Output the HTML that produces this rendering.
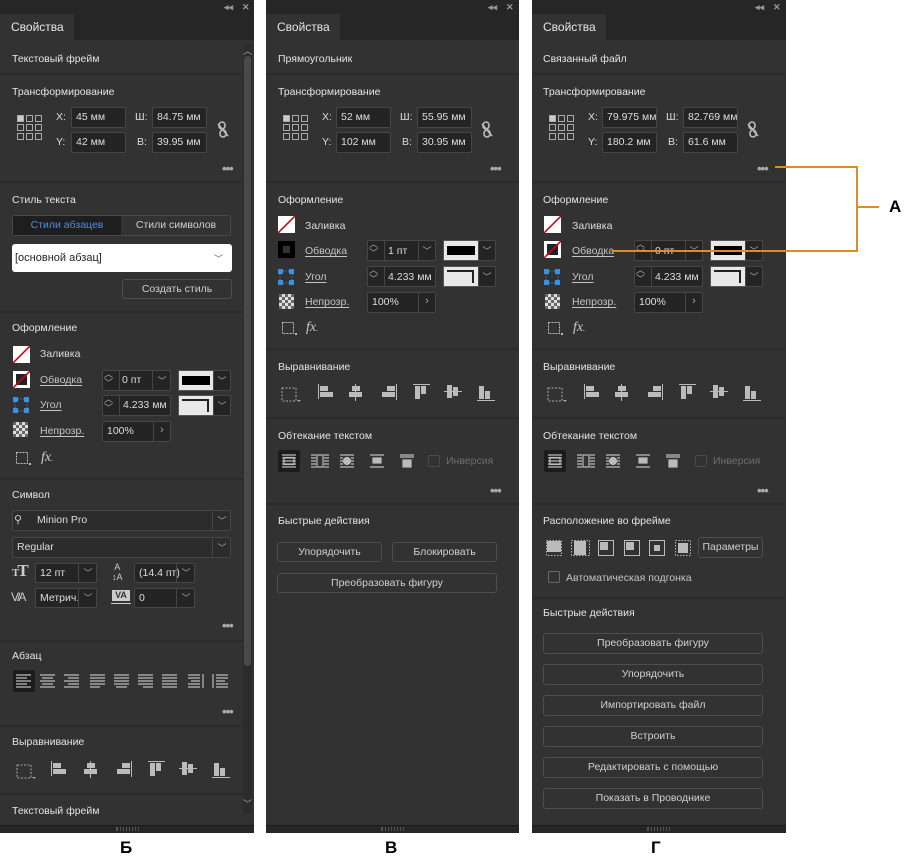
<!DOCTYPE html>
<html><head><meta charset="utf-8">
<style>
*{margin:0;padding:0;box-sizing:border-box}
body{width:910px;height:862px;background:#fff;position:relative;overflow:hidden;font-family:"Liberation Sans",sans-serif}
.p{position:absolute;top:0;height:833px;background:#323232;overflow:hidden}
.top{position:absolute;left:0;top:0;right:0;height:40px;background:#262626}
.tab{position:absolute;left:0;top:14px;width:74px;height:26px;background:#323232;color:#e6e6e6;font-size:12px;line-height:26px;padding-left:11px}
.ctl{position:absolute;top:2px;color:#999;font-size:9px;font-weight:bold}
.l{position:absolute;font-size:10.5px;line-height:14px;color:#dcdcdc;white-space:nowrap}
.h{color:#e4e4e4}
.u{color:#c4c4c4;text-decoration:underline;text-underline-offset:2px}
.in{position:absolute;background:#242424;border:1px solid #464646;border-radius:2px;color:#dedede;font-size:10.5px;padding-left:4px;white-space:nowrap;overflow:hidden}
.b{position:absolute;border:1px solid #4e4e4e;border-radius:3px;color:#d0d0d0;font-size:10.5px;text-align:center;white-space:nowrap}
.dv{position:absolute;left:0;right:0;height:2px;background:#2a2a2a}
.dots{position:absolute;font-size:13px;color:#aaa;letter-spacing:-1px;line-height:8px;font-weight:bold}
.bot{position:absolute;left:0;right:0;top:825px;height:8px;background:#262626;border-top:1px solid #1a1a1a}
.grip{position:absolute;top:827px;width:24px;height:4px;border-left:1px solid #555;background:repeating-linear-gradient(90deg,#555 0 1px,transparent 1px 3px)}
.sw{position:absolute;background:#e8e8e8;border:1px solid #555}
.chev{position:absolute;color:#aaa;font-size:9px;text-align:center}
svg{position:absolute}
.lab{position:absolute;font-size:17px;font-weight:bold;color:#000}
</style></head><body>

<!-- ========== PANEL 1 ========== -->
<div class="p" style="left:0;width:254px">
<div class="top"></div><div class="tab">Свойства</div>
<div class="ctl" style="left:224px">◂◂</div><div class="ctl" style="left:242px">✕</div>
<!-- scrollbar -->
<div style="position:absolute;left:243px;top:44px;width:9px;height:770px;background:#2c2c2c"></div>
<div style="position:absolute;left:244px;top:56px;width:7px;height:610px;background:#4a4a4a;border-radius:4px"></div>
<div class="l h" style="left:12px;top:52px">Текстовый фрейм</div>
<div class="dv" style="top:73px;right:12px"></div>
<div class="l h" style="left:12px;top:85px">Трансформирование</div>
<svg style="left:17px;top:115px" width="26" height="26"><g fill="none" stroke="#aaa"><rect x="0.5" y="0.5" width="6" height="6" fill="#ccc"/><rect x="9.5" y="0.5" width="6" height="6"/><rect x="18.5" y="0.5" width="6" height="6"/><rect x="0.5" y="9.5" width="6" height="6"/><rect x="9.5" y="9.5" width="6" height="6"/><rect x="18.5" y="9.5" width="6" height="6"/><rect x="0.5" y="18.5" width="6" height="6"/><rect x="9.5" y="18.5" width="6" height="6"/><rect x="18.5" y="18.5" width="6" height="6"/></g></svg>
<div class="l" style="left:56px;top:110px">X:</div><div class="in" style="left:71px;top:107px;width:55px;height:21px;line-height:19px">45 мм</div>
<div class="l" style="left:56px;top:135px">Y:</div><div class="in" style="left:71px;top:132px;width:55px;height:21px;line-height:19px">42 мм</div>
<div class="l" style="left:135px;top:110px">Ш:</div><div class="in" style="left:152px;top:107px;width:55px;height:21px;line-height:19px">84.75 мм</div>
<div class="l" style="left:137px;top:135px">В:</div><div class="in" style="left:152px;top:132px;width:55px;height:21px;line-height:19px">39.95 мм</div>
<svg style="left:217px;top:121px" width="12" height="18"><g fill="none" stroke="#bbb" stroke-width="1.6"><rect x="2" y="1" width="6" height="7" rx="3"/><rect x="3" y="9" width="6" height="7" rx="3"/><line x1="1" y1="3" x2="11" y2="15"/></g></svg>
<div class="dots" style="left:222px;top:165px">•••</div>
<div class="dv" style="top:181px;right:12px"></div>
<div class="l h" style="left:12px;top:193px">Стиль текста</div>
<div style="position:absolute;left:12px;top:215px;width:219px;height:21px;border:1px solid #4a4a4a;border-radius:3px"></div>
<div style="position:absolute;left:13px;top:216px;width:108px;height:19px;background:#1e1e1e;color:#4a90e2;font-size:10.5px;text-align:center;line-height:19px">Стили абзацев</div>
<div style="position:absolute;left:122px;top:216px;width:108px;height:19px;color:#d0d0d0;font-size:10.5px;text-align:center;line-height:19px">Стили символов</div>
<div style="position:absolute;left:12px;top:244px;width:220px;height:28px;background:#fff;border-radius:3px;color:#222;font-size:11px;line-height:28px;padding-left:3px">[основной абзац]</div>
<div class="chev" style="left:214px;top:252px;color:#666">﹀</div>
<div class="b" style="left:122px;top:279px;width:110px;height:20px;line-height:18px">Создать стиль</div>
<div class="dv" style="top:311px;right:12px"></div>
<div class="l h" style="left:12px;top:321px">Оформление</div>
<!-- fill -->
<svg style="left:13px;top:346px" width="17" height="17"><rect width="17" height="17" fill="#fff"/><line x1="0" y1="17" x2="17" y2="0" stroke="#d0021b" stroke-width="1.6"/></svg>
<div class="l" style="left:40px;top:347px">Заливка</div>
<svg style="left:13px;top:371px" width="17" height="17"><rect width="17" height="17" fill="#fff"/><rect x="3" y="3" width="11" height="11" fill="#222"/><line x1="0" y1="17" x2="17" y2="0" stroke="#d0021b" stroke-width="1.6"/></svg>
<div class="l u" style="left:40px;top:373px">Обводка </div>
<div class="in" style="left:102px;top:370px;width:69px;height:21px"></div>
<div class="chev" style="left:104px;top:370px;line-height:9px">︿<br>﹀</div>
<div style="position:absolute;left:119px;top:371px;width:1px;height:19px;background:#464646"></div>
<div style="position:absolute;left:152px;top:371px;width:1px;height:19px;background:#464646"></div>
<div class="l" style="left:122px;top:373px">0 пт</div><div class="chev" style="left:154px;top:374px;width:16px">﹀</div>
<div class="sw" style="left:178px;top:370px;width:36px;height:21px"><div style="margin:5px 3px;height:9px;background:#000"></div></div>
<div class="in" style="left:213px;top:370px;width:18px;height:21px;padding:0"></div><div class="chev" style="left:214px;top:374px;width:16px">﹀</div>
<svg style="left:13px;top:397px" width="16" height="16"><g fill="#3d8fe0"><rect width="5" height="5"/><rect x="11" width="5" height="5"/><rect y="11" width="5" height="5"/><rect x="11" y="11" width="5" height="5"/></g><g stroke="#3d8fe0" stroke-dasharray="1 1.5"><line x1="5" y1="2" x2="11" y2="2"/><line x1="5" y1="14" x2="11" y2="14"/><line x1="2" y1="5" x2="2" y2="11"/><line x1="14" y1="5" x2="14" y2="11"/></g></svg>
<div class="l u" style="left:40px;top:398px">Угол </div>
<div class="in" style="left:102px;top:395px;width:69px;height:21px"></div>
<div class="chev" style="left:104px;top:395px;line-height:9px">︿<br>﹀</div>
<div style="position:absolute;left:119px;top:396px;width:1px;height:19px;background:#464646"></div>
<div class="l" style="left:123px;top:398px">4.233 мм</div>
<div class="sw" style="left:178px;top:395px;width:36px;height:21px"><div style="position:absolute;left:3px;top:3px;width:27px;height:13px;border-top:2px solid #222;border-right:2px solid #222"></div></div>
<div class="in" style="left:213px;top:395px;width:18px;height:21px;padding:0"></div><div class="chev" style="left:214px;top:399px;width:16px">﹀</div>
<svg style="left:13px;top:422px" width="15" height="15"><rect width="15" height="15" fill="#ddd"/><g fill="#666"><rect x="0" y="0" width="3" height="3"/><rect x="6" y="0" width="3" height="3"/><rect x="12" y="0" width="3" height="3"/><rect x="3" y="3" width="3" height="3"/><rect x="9" y="3" width="3" height="3"/><rect x="0" y="6" width="3" height="3"/><rect x="6" y="6" width="3" height="3"/><rect x="12" y="6" width="3" height="3"/><rect x="3" y="9" width="3" height="3"/><rect x="9" y="9" width="3" height="3"/><rect x="0" y="12" width="3" height="3"/><rect x="6" y="12" width="3" height="3"/><rect x="12" y="12" width="3" height="3"/></g></svg>
<div class="l u" style="left:40px;top:424px">Непрозр. </div>
<div class="in" style="left:102px;top:421px;width:69px;height:21px;line-height:19px">100%</div>
<div style="position:absolute;left:153px;top:422px;width:1px;height:19px;background:#464646"></div><div class="chev" style="left:154px;top:424px;width:16px;font-size:11px">›</div>
<svg style="left:16px;top:452px" width="16" height="14"><rect x="0.5" y="0.5" width="11" height="11" fill="none" stroke="#bbb" stroke-dasharray="2 1"/><rect x="13" y="11" width="2" height="2" fill="#bbb"/></svg>
<div class="l" style="left:41px;top:451px;font-style:italic;font-family:'Liberation Serif',serif;font-size:14px;color:#ccc">fx<span style="font-size:8px">.</span></div>
<div class="dv" style="top:478px;right:12px"></div>
<div class="l h" style="left:12px;top:488px">Символ</div>
<div class="in" style="left:12px;top:510px;width:219px;height:21px;line-height:19px;background:#2c2c2c;padding-left:24px">Minion Pro</div>
<div style="position:absolute;left:14px;top:513px;color:#ccc;font-size:11px">⚲</div>
<div style="position:absolute;left:212px;top:511px;width:1px;height:19px;background:#464646"></div><div class="chev" style="left:213px;top:514px;width:18px">﹀</div>
<div class="in" style="left:12px;top:537px;width:219px;height:21px;line-height:19px;background:#2c2c2c">Regular</div>
<div style="position:absolute;left:212px;top:538px;width:1px;height:19px;background:#464646"></div><div class="chev" style="left:213px;top:541px;width:18px">﹀</div>
<div class="l" style="left:12px;top:564px;font-size:17px;font-family:'Liberation Serif',serif;font-weight:bold;color:#ccc;letter-spacing:-2px"><span style="font-size:11px">T</span>T</div>
<div class="in" style="left:35px;top:563px;width:62px;height:20px;line-height:18px">12 пт</div>
<div style="position:absolute;left:78px;top:564px;width:1px;height:18px;background:#464646"></div><div class="chev" style="left:79px;top:566px;width:18px">﹀</div>
<div class="l" style="left:112px;top:562px;font-size:9px;line-height:10px;color:#ccc;text-align:center">A<br>↕A</div>
<div class="in" style="left:134px;top:563px;width:61px;height:20px;line-height:18px">(14.4 пт)</div>
<div style="position:absolute;left:176px;top:564px;width:1px;height:18px;background:#464646"></div><div class="chev" style="left:177px;top:566px;width:18px">﹀</div>
<div class="l" style="left:11px;top:590px;font-size:12px;color:#ccc;letter-spacing:-2px">V/A</div>
<div class="in" style="left:35px;top:588px;width:62px;height:20px;line-height:18px">Метрич.</div>
<div style="position:absolute;left:78px;top:589px;width:1px;height:18px;background:#464646"></div><div class="chev" style="left:79px;top:591px;width:18px">﹀</div>
<div style="position:absolute;left:112px;top:590px;width:18px;height:11px;background:#ccc;color:#323232;font-size:9px;font-weight:bold;line-height:11px;text-align:center">VA</div>
<div style="position:absolute;left:111px;top:603px;width:20px;height:1px;background:#ccc"></div>
<div class="in" style="left:134px;top:588px;width:61px;height:20px;line-height:18px">0</div>
<div style="position:absolute;left:176px;top:589px;width:1px;height:18px;background:#464646"></div><div class="chev" style="left:177px;top:591px;width:18px">﹀</div>
<div class="dots" style="left:222px;top:622px">•••</div>
<div class="dv" style="top:640px;right:12px"></div>
<div class="l h" style="left:12px;top:649px">Абзац</div>
<div style="position:absolute;left:13px;top:670px;width:22px;height:22px;background:#1c1c1c;border-radius:2px"></div>
<svg style="left:16px;top:674px" width="216" height="14"><g stroke="#bbb" stroke-width="1.2">
<path d="M0 1h15M0 4h11M0 7h15M0 10h11M0 13h15"/>
<path d="M24 1h15M26 4h11M24 7h15M26 10h11M24 13h15"/>
<path d="M48 1h15M52 4h11M48 7h15M52 10h11M48 13h15"/>
<path d="M74 1h15M74 4h15M74 7h15M74 10h15M74 13h10"/>
<path d="M98 1h15M98 4h15M98 7h15M98 10h15M100 13h11"/>
<path d="M122 1h15M122 4h15M122 7h15M122 10h15M127 13h10"/>
<path d="M146 1h15M146 4h15M146 7h15M146 10h15M146 13h15"/>
<path d="M172 1h12M172 4h12M175 7h9M172 10h12M172 13h12M187 0v14"/>
<path d="M197 0v14M200 1h12M200 4h12M200 7h9M200 10h12M200 13h12"/>
</g></svg>
<div class="dots" style="left:222px;top:708px">•••</div>
<div class="dv" style="top:725px;right:12px"></div>
<div class="l h" style="left:12px;top:735px">Выравнивание</div>
<svg style="left:16px;top:761px" width="220" height="20">
<rect x="1" y="4" width="14" height="13" fill="none" stroke="#aaa" stroke-dasharray="2 1.5"/><path d="M16 16l4 0l-2 2z" fill="#aaa"/>
<g fill="#bbb"><rect x="35" y="0" width="1" height="15"/><rect x="37" y="2" width="8" height="5"/><rect x="37" y="8" width="13" height="5"/>
<rect x="74" y="0" width="1" height="17"/><rect x="71" y="2" width="8" height="5"/><rect x="68" y="8" width="13" height="5"/>
<rect x="115" y="0" width="1" height="16"/><rect x="106" y="2" width="8" height="5"/><rect x="101" y="8" width="13" height="5"/>
<rect x="132" y="0" width="17" height="1"/><rect x="134" y="2" width="5" height="13"/><rect x="140" y="2" width="5" height="8"/>
<rect x="163" y="7" width="18" height="1"/><rect x="166" y="1" width="5" height="13"/><rect x="172" y="3" width="5" height="9"/>
<rect x="196" y="16" width="18" height="1"/><rect x="198" y="2" width="5" height="13"/><rect x="204" y="7" width="5" height="8"/></g></svg>
<div class="dv" style="top:793px;right:12px"></div>
<div class="l h" style="left:12px;top:804px">Текстовый фрейм</div>
<div class="chev" style="left:243px;top:797px">﹀</div><div class="chev" style="left:243px;top:44px">︿</div>
<div class="bot"></div><div class="grip" style="left:116px"></div>
</div>

<!-- ========== PANEL 2 ========== -->
<div class="p" style="left:266px;width:253px">
<div class="top"></div><div class="tab">Свойства</div>
<div class="ctl" style="left:222px">◂◂</div><div class="ctl" style="left:240px">✕</div>
<div class="l h" style="left:12px;top:52px">Прямоугольник</div>
<div class="dv" style="top:73px"></div>
<div class="l h" style="left:12px;top:85px">Трансформирование</div>
<svg style="left:17px;top:115px" width="26" height="26"><g fill="none" stroke="#aaa"><rect x="0.5" y="0.5" width="6" height="6" fill="#ccc"/><rect x="9.5" y="0.5" width="6" height="6"/><rect x="18.5" y="0.5" width="6" height="6"/><rect x="0.5" y="9.5" width="6" height="6"/><rect x="9.5" y="9.5" width="6" height="6"/><rect x="18.5" y="9.5" width="6" height="6"/><rect x="0.5" y="18.5" width="6" height="6"/><rect x="9.5" y="18.5" width="6" height="6"/><rect x="18.5" y="18.5" width="6" height="6"/></g></svg>
<div class="l" style="left:56px;top:110px">X:</div><div class="in" style="left:70px;top:107px;width:55px;height:21px;line-height:19px">52 мм</div>
<div class="l" style="left:56px;top:135px">Y:</div><div class="in" style="left:70px;top:132px;width:55px;height:21px;line-height:19px">102 мм</div>
<div class="l" style="left:134px;top:110px">Ш:</div><div class="in" style="left:151px;top:107px;width:55px;height:21px;line-height:19px">55.95 мм</div>
<div class="l" style="left:136px;top:135px">В:</div><div class="in" style="left:151px;top:132px;width:55px;height:21px;line-height:19px">30.95 мм</div>
<svg style="left:215px;top:121px" width="12" height="18"><g fill="none" stroke="#bbb" stroke-width="1.6"><rect x="2" y="1" width="6" height="7" rx="3"/><rect x="3" y="9" width="6" height="7" rx="3"/><line x1="1" y1="3" x2="11" y2="15"/></g></svg>
<div class="dots" style="left:224px;top:165px">•••</div>
<div class="dv" style="top:181px"></div>
<div class="l h" style="left:12px;top:193px">Оформление</div>
<svg style="left:12px;top:216px" width="17" height="17"><rect width="17" height="17" fill="#fff"/><line x1="0" y1="17" x2="17" y2="0" stroke="#d0021b" stroke-width="1.6"/></svg>
<div class="l" style="left:39px;top:219px">Заливка</div>
<svg style="left:12px;top:241px" width="17" height="17"><rect width="17" height="17" fill="#000"/><rect x="5" y="5" width="7" height="7" fill="#333"/></svg>
<div class="l u" style="left:39px;top:244px">Обводка </div>
<div class="in" style="left:101px;top:240px;width:69px;height:21px"></div>
<div class="chev" style="left:103px;top:240px;line-height:9px">︿<br>﹀</div>
<div style="position:absolute;left:118px;top:241px;width:1px;height:19px;background:#464646"></div>
<div style="position:absolute;left:152px;top:241px;width:1px;height:19px;background:#464646"></div>
<div class="l" style="left:122px;top:244px">1 пт</div><div class="chev" style="left:153px;top:244px;width:16px">﹀</div>
<div class="sw" style="left:177px;top:240px;width:36px;height:21px"><div style="margin:5px 3px;height:9px;background:#000"></div></div>
<div class="in" style="left:212px;top:240px;width:18px;height:21px;padding:0"></div><div class="chev" style="left:213px;top:244px;width:16px">﹀</div>
<svg style="left:12px;top:269px" width="16" height="16"><g fill="#3d8fe0"><rect width="5" height="5"/><rect x="11" width="5" height="5"/><rect y="11" width="5" height="5"/><rect x="11" y="11" width="5" height="5"/></g><g stroke="#3d8fe0" stroke-dasharray="1 1.5"><line x1="5" y1="2" x2="11" y2="2"/><line x1="5" y1="14" x2="11" y2="14"/><line x1="2" y1="5" x2="2" y2="11"/><line x1="14" y1="5" x2="14" y2="11"/></g></svg>
<div class="l u" style="left:39px;top:270px">Угол </div>
<div class="in" style="left:101px;top:266px;width:69px;height:21px"></div>
<div class="chev" style="left:103px;top:266px;line-height:9px">︿<br>﹀</div>
<div style="position:absolute;left:118px;top:267px;width:1px;height:19px;background:#464646"></div>
<div class="l" style="left:122px;top:270px">4.233 мм</div>
<div class="sw" style="left:177px;top:266px;width:36px;height:21px"><div style="position:absolute;left:3px;top:3px;width:27px;height:13px;border-top:2px solid #222;border-right:2px solid #222"></div></div>
<div class="in" style="left:212px;top:266px;width:18px;height:21px;padding:0"></div><div class="chev" style="left:213px;top:270px;width:16px">﹀</div>
<svg style="left:13px;top:294px" width="15" height="15"><rect width="15" height="15" fill="#ddd"/><g fill="#666"><rect x="0" y="0" width="3" height="3"/><rect x="6" y="0" width="3" height="3"/><rect x="12" y="0" width="3" height="3"/><rect x="3" y="3" width="3" height="3"/><rect x="9" y="3" width="3" height="3"/><rect x="0" y="6" width="3" height="3"/><rect x="6" y="6" width="3" height="3"/><rect x="12" y="6" width="3" height="3"/><rect x="3" y="9" width="3" height="3"/><rect x="9" y="9" width="3" height="3"/><rect x="0" y="12" width="3" height="3"/><rect x="6" y="12" width="3" height="3"/><rect x="12" y="12" width="3" height="3"/></g></svg>
<div class="l u" style="left:39px;top:295px">Непрозр. </div>
<div class="in" style="left:101px;top:292px;width:69px;height:21px;line-height:19px">100%</div>
<div style="position:absolute;left:152px;top:293px;width:1px;height:19px;background:#464646"></div><div class="chev" style="left:153px;top:295px;width:16px;font-size:11px">›</div>
<svg style="left:16px;top:322px" width="16" height="14"><rect x="0.5" y="0.5" width="11" height="11" fill="none" stroke="#bbb" stroke-dasharray="2 1"/><rect x="13" y="11" width="2" height="2" fill="#bbb"/></svg>
<div class="l" style="left:40px;top:321px;font-style:italic;font-family:'Liberation Serif',serif;font-size:14px;color:#ccc">fx<span style="font-size:8px">.</span></div>
<div class="dv" style="top:348px"></div>
<div class="l h" style="left:12px;top:360px">Выравнивание</div>
<svg style="left:15px;top:384px" width="220" height="20">
<rect x="1" y="4" width="14" height="13" fill="none" stroke="#aaa" stroke-dasharray="2 1.5"/><path d="M16 16l4 0l-2 2z" fill="#aaa"/>
<g fill="#bbb"><rect x="37" y="0" width="1" height="15"/><rect x="39" y="2" width="8" height="5"/><rect x="39" y="8" width="13" height="5"/>
<rect x="74" y="0" width="1" height="17"/><rect x="71" y="2" width="8" height="5"/><rect x="68" y="8" width="13" height="5"/>
<rect x="115" y="0" width="1" height="16"/><rect x="106" y="2" width="8" height="5"/><rect x="101" y="8" width="13" height="5"/>
<rect x="132" y="0" width="17" height="1"/><rect x="134" y="2" width="5" height="13"/><rect x="140" y="2" width="5" height="8"/>
<rect x="163" y="7" width="18" height="1"/><rect x="166" y="1" width="5" height="13"/><rect x="172" y="3" width="5" height="9"/>
<rect x="196" y="16" width="18" height="1"/><rect x="198" y="2" width="5" height="13"/><rect x="204" y="7" width="5" height="8"/></g></svg>
<div class="dv" style="top:417px"></div>
<div class="l h" style="left:12px;top:429px">Обтекание текстом</div>
<div style="position:absolute;left:12px;top:450px;width:22px;height:22px;background:#1c1c1c;border-radius:2px"></div>
<svg style="left:15px;top:454px" width="190" height="14"><g stroke="#bbb" stroke-width="1.2" fill="none">
<path d="M1 1h14M1 4h14M1 7h14M1 10h14M1 13h14M3 3.5h10v7h-10z"/>
<path d="M30 1h5M30 4h5M30 7h5M30 10h5M30 13h5M43 1h5M43 4h5M43 7h5M43 10h5M43 13h5"/><rect x="36" y="1" width="6" height="12"/>
<path d="M59 1h14M59 4h3M70 4h3M59 7h3M70 7h3M59 10h3M70 10h3M59 13h14"/><circle cx="66" cy="7" r="3.5" fill="#bbb"/>
<path d="M89 1h14M89 13h14"/><rect x="92" y="4" width="8" height="5" fill="#bbb"/>
<path d="M119 1h14M119 3h14"/><rect x="122" y="6" width="8" height="7" fill="#bbb"/>
</g></svg>
<div style="position:absolute;left:162px;top:455px;width:12px;height:12px;border:1px solid #4a4a4a;border-radius:2px"></div>
<div class="l" style="left:180px;top:454px;color:#6e6e6e">Инверсия</div>
<div class="dots" style="left:224px;top:487px">•••</div>
<div class="dv" style="top:503px"></div>
<div class="l h" style="left:12px;top:514px">Быстрые действия</div>
<div class="b" style="left:11px;top:542px;width:105px;height:20px;line-height:18px">Упорядочить</div>
<div class="b" style="left:126px;top:542px;width:105px;height:20px;line-height:18px">Блокировать</div>
<div class="b" style="left:11px;top:573px;width:220px;height:20px;line-height:18px">Преобразовать фигуру</div>
<div class="bot"></div><div class="grip" style="left:115px"></div>
</div>

<!-- ========== PANEL 3 ========== -->
<div class="p" style="left:532px;width:254px">
<div class="top"></div><div class="tab">Свойства</div>
<div class="ctl" style="left:223px">◂◂</div><div class="ctl" style="left:241px">✕</div>
<div class="l h" style="left:11px;top:52px">Связанный файл</div>
<div class="dv" style="top:73px"></div>
<div class="l h" style="left:11px;top:85px">Трансформирование</div>
<svg style="left:17px;top:115px" width="26" height="26"><g fill="none" stroke="#aaa"><rect x="0.5" y="0.5" width="6" height="6" fill="#ccc"/><rect x="9.5" y="0.5" width="6" height="6"/><rect x="18.5" y="0.5" width="6" height="6"/><rect x="0.5" y="9.5" width="6" height="6"/><rect x="9.5" y="9.5" width="6" height="6"/><rect x="18.5" y="9.5" width="6" height="6"/><rect x="0.5" y="18.5" width="6" height="6"/><rect x="9.5" y="18.5" width="6" height="6"/><rect x="18.5" y="18.5" width="6" height="6"/></g></svg>
<div class="l" style="left:56px;top:110px">X:</div><div class="in" style="left:70px;top:107px;width:55px;height:21px;line-height:19px">79.975 мм</div>
<div class="l" style="left:56px;top:135px">Y:</div><div class="in" style="left:70px;top:132px;width:55px;height:21px;line-height:19px">180.2 мм</div>
<div class="l" style="left:134px;top:110px">Ш:</div><div class="in" style="left:151px;top:107px;width:55px;height:21px;line-height:19px">82.769 мм</div>
<div class="l" style="left:136px;top:135px">В:</div><div class="in" style="left:151px;top:132px;width:55px;height:21px;line-height:19px">61.6 мм</div>
<svg style="left:215px;top:121px" width="12" height="18"><g fill="none" stroke="#bbb" stroke-width="1.6"><rect x="2" y="1" width="6" height="7" rx="3"/><rect x="3" y="9" width="6" height="7" rx="3"/><line x1="1" y1="3" x2="11" y2="15"/></g></svg>
<div class="dots" style="left:225px;top:165px">•••</div>
<div class="dv" style="top:181px"></div>
<div class="l h" style="left:11px;top:193px">Оформление</div>
<svg style="left:12px;top:216px" width="17" height="17"><rect width="17" height="17" fill="#fff"/><line x1="0" y1="17" x2="17" y2="0" stroke="#d0021b" stroke-width="1.6"/></svg>
<div class="l" style="left:40px;top:219px">Заливка</div>
<svg style="left:12px;top:241px" width="17" height="17"><rect width="17" height="17" fill="#fff"/><rect x="3" y="3" width="11" height="11" fill="#222"/><line x1="0" y1="17" x2="17" y2="0" stroke="#d0021b" stroke-width="1.6"/></svg>
<div class="l u" style="left:40px;top:244px">Обводка </div>
<div class="in" style="left:102px;top:240px;width:69px;height:21px"></div>
<div class="chev" style="left:104px;top:240px;line-height:9px">︿<br>﹀</div>
<div style="position:absolute;left:119px;top:241px;width:1px;height:19px;background:#464646"></div>
<div style="position:absolute;left:153px;top:241px;width:1px;height:19px;background:#464646"></div>
<div class="l" style="left:123px;top:244px">0 пт</div><div class="chev" style="left:154px;top:244px;width:16px">﹀</div>
<div class="sw" style="left:178px;top:240px;width:36px;height:21px"><div style="margin:5px 3px;height:9px;background:#000"></div></div>
<div class="in" style="left:213px;top:240px;width:18px;height:21px;padding:0"></div><div class="chev" style="left:214px;top:244px;width:16px">﹀</div>
<svg style="left:12px;top:269px" width="16" height="16"><g fill="#3d8fe0"><rect width="5" height="5"/><rect x="11" width="5" height="5"/><rect y="11" width="5" height="5"/><rect x="11" y="11" width="5" height="5"/></g><g stroke="#3d8fe0" stroke-dasharray="1 1.5"><line x1="5" y1="2" x2="11" y2="2"/><line x1="5" y1="14" x2="11" y2="14"/><line x1="2" y1="5" x2="2" y2="11"/><line x1="14" y1="5" x2="14" y2="11"/></g></svg>
<div class="l u" style="left:40px;top:270px">Угол </div>
<div class="in" style="left:102px;top:266px;width:69px;height:21px"></div>
<div class="chev" style="left:104px;top:266px;line-height:9px">︿<br>﹀</div>
<div style="position:absolute;left:119px;top:267px;width:1px;height:19px;background:#464646"></div>
<div class="l" style="left:123px;top:270px">4.233 мм</div>
<div class="sw" style="left:178px;top:266px;width:36px;height:21px"><div style="position:absolute;left:3px;top:3px;width:27px;height:13px;border-top:2px solid #222;border-right:2px solid #222"></div></div>
<div class="in" style="left:213px;top:266px;width:18px;height:21px;padding:0"></div><div class="chev" style="left:214px;top:270px;width:16px">﹀</div>
<svg style="left:13px;top:294px" width="15" height="15"><rect width="15" height="15" fill="#ddd"/><g fill="#666"><rect x="0" y="0" width="3" height="3"/><rect x="6" y="0" width="3" height="3"/><rect x="12" y="0" width="3" height="3"/><rect x="3" y="3" width="3" height="3"/><rect x="9" y="3" width="3" height="3"/><rect x="0" y="6" width="3" height="3"/><rect x="6" y="6" width="3" height="3"/><rect x="12" y="6" width="3" height="3"/><rect x="3" y="9" width="3" height="3"/><rect x="9" y="9" width="3" height="3"/><rect x="0" y="12" width="3" height="3"/><rect x="6" y="12" width="3" height="3"/><rect x="12" y="12" width="3" height="3"/></g></svg>
<div class="l u" style="left:40px;top:295px">Непрозр. </div>
<div class="in" style="left:102px;top:292px;width:69px;height:21px;line-height:19px">100%</div>
<div style="position:absolute;left:153px;top:293px;width:1px;height:19px;background:#464646"></div><div class="chev" style="left:154px;top:295px;width:16px;font-size:11px">›</div>
<svg style="left:16px;top:322px" width="16" height="14"><rect x="0.5" y="0.5" width="11" height="11" fill="none" stroke="#bbb" stroke-dasharray="2 1"/><rect x="13" y="11" width="2" height="2" fill="#bbb"/></svg>
<div class="l" style="left:41px;top:321px;font-style:italic;font-family:'Liberation Serif',serif;font-size:14px;color:#ccc">fx<span style="font-size:8px">.</span></div>
<div class="dv" style="top:348px"></div>
<div class="l h" style="left:11px;top:360px">Выравнивание</div>
<svg style="left:15px;top:384px" width="220" height="20">
<rect x="1" y="4" width="14" height="13" fill="none" stroke="#aaa" stroke-dasharray="2 1.5"/><path d="M16 16l4 0l-2 2z" fill="#aaa"/>
<g fill="#bbb"><rect x="37" y="0" width="1" height="15"/><rect x="39" y="2" width="8" height="5"/><rect x="39" y="8" width="13" height="5"/>
<rect x="74" y="0" width="1" height="17"/><rect x="71" y="2" width="8" height="5"/><rect x="68" y="8" width="13" height="5"/>
<rect x="115" y="0" width="1" height="16"/><rect x="106" y="2" width="8" height="5"/><rect x="101" y="8" width="13" height="5"/>
<rect x="132" y="0" width="17" height="1"/><rect x="134" y="2" width="5" height="13"/><rect x="140" y="2" width="5" height="8"/>
<rect x="163" y="7" width="18" height="1"/><rect x="166" y="1" width="5" height="13"/><rect x="172" y="3" width="5" height="9"/>
<rect x="196" y="16" width="18" height="1"/><rect x="198" y="2" width="5" height="13"/><rect x="204" y="7" width="5" height="8"/></g></svg>
<div class="dv" style="top:417px"></div>
<div class="l h" style="left:11px;top:429px">Обтекание текстом</div>
<div style="position:absolute;left:12px;top:450px;width:22px;height:22px;background:#1c1c1c;border-radius:2px"></div>
<svg style="left:15px;top:454px" width="190" height="14"><g stroke="#bbb" stroke-width="1.2" fill="none">
<path d="M1 1h14M1 4h14M1 7h14M1 10h14M1 13h14M3 3.5h10v7h-10z"/>
<path d="M30 1h5M30 4h5M30 7h5M30 10h5M30 13h5M43 1h5M43 4h5M43 7h5M43 10h5M43 13h5"/><rect x="36" y="1" width="6" height="12"/>
<path d="M59 1h14M59 4h3M70 4h3M59 7h3M70 7h3M59 10h3M70 10h3M59 13h14"/><circle cx="66" cy="7" r="3.5" fill="#bbb"/>
<path d="M89 1h14M89 13h14"/><rect x="92" y="4" width="8" height="5" fill="#bbb"/>
<path d="M119 1h14M119 3h14"/><rect x="122" y="6" width="8" height="7" fill="#bbb"/>
</g></svg>
<div style="position:absolute;left:163px;top:455px;width:12px;height:12px;border:1px solid #4a4a4a;border-radius:2px"></div>
<div class="l" style="left:181px;top:454px;color:#6e6e6e">Инверсия</div>
<div class="dots" style="left:225px;top:487px">•••</div>
<div class="dv" style="top:503px"></div>
<div class="l h" style="left:11px;top:514px">Расположение во фрейме</div>
<svg style="left:14px;top:539px" width="145" height="18"><g fill="#bbb">
<rect x="1" y="2" width="14" height="11"/><g fill="none" stroke="#bbb" stroke-dasharray="1.5 1.5"><rect x="0.5" y="1.5" width="15" height="15"/></g>
<rect x="28" y="2" width="12" height="14"/><g fill="none" stroke="#bbb"><rect x="25.5" y="1.5" width="18" height="15" stroke-dasharray="1.5 1.5"/>
<rect x="52.5" y="1.5" width="15" height="15"/><rect x="78.5" y="1.5" width="15" height="15"/><rect x="103.5" y="1.5" width="15" height="15"/><rect x="129.5" y="1.5" width="15" height="15" stroke-dasharray="1.5 1.5"/></g>
<rect x="54" y="3" width="8" height="8"/><rect x="80" y="3" width="8" height="8"/><rect x="108" y="6" width="6" height="6"/><rect x="132" y="4" width="10" height="10"/></g></svg>
<div class="b" style="left:166px;top:537px;width:65px;height:21px;line-height:19px">Параметры</div>
<div style="position:absolute;left:16px;top:571px;width:12px;height:12px;border:1px solid #6a6a6a;border-radius:2px"></div>
<div class="l" style="left:34px;top:571px;color:#c4c4c4">Автоматическая подгонка</div>
<div class="dv" style="top:597px"></div>
<div class="l h" style="left:11px;top:606px">Быстрые действия</div>
<div class="b" style="left:11px;top:633px;width:220px;height:21px;line-height:19px">Преобразовать фигуру</div>
<div class="b" style="left:11px;top:664px;width:220px;height:21px;line-height:19px">Упорядочить</div>
<div class="b" style="left:11px;top:695px;width:220px;height:21px;line-height:19px">Импортировать файл</div>
<div class="b" style="left:11px;top:726px;width:220px;height:21px;line-height:19px">Встроить</div>
<div class="b" style="left:11px;top:757px;width:220px;height:21px;line-height:19px">Редактировать с помощью</div>
<div class="b" style="left:11px;top:788px;width:220px;height:21px;line-height:19px">Показать в Проводнике</div>
<div class="bot"></div><div class="grip" style="left:115px"></div>
</div>

<!-- annotations -->
<div style="position:absolute;left:775px;top:166px;width:83px;height:2px;background:#e08a2a"></div>
<div style="position:absolute;left:856px;top:166px;width:2px;height:86px;background:#e08a2a"></div>
<div style="position:absolute;left:612px;top:250px;width:246px;height:2px;background:#e08a2a"></div>
<div style="position:absolute;left:856px;top:206px;width:23px;height:2px;background:#e08a2a"></div>
<div class="lab" style="left:889px;top:197px">A</div>
<div class="lab" style="left:120px;top:838px">Б</div>
<div class="lab" style="left:385px;top:838px">В</div>
<div class="lab" style="left:651px;top:838px">Г</div>
</body></html>
